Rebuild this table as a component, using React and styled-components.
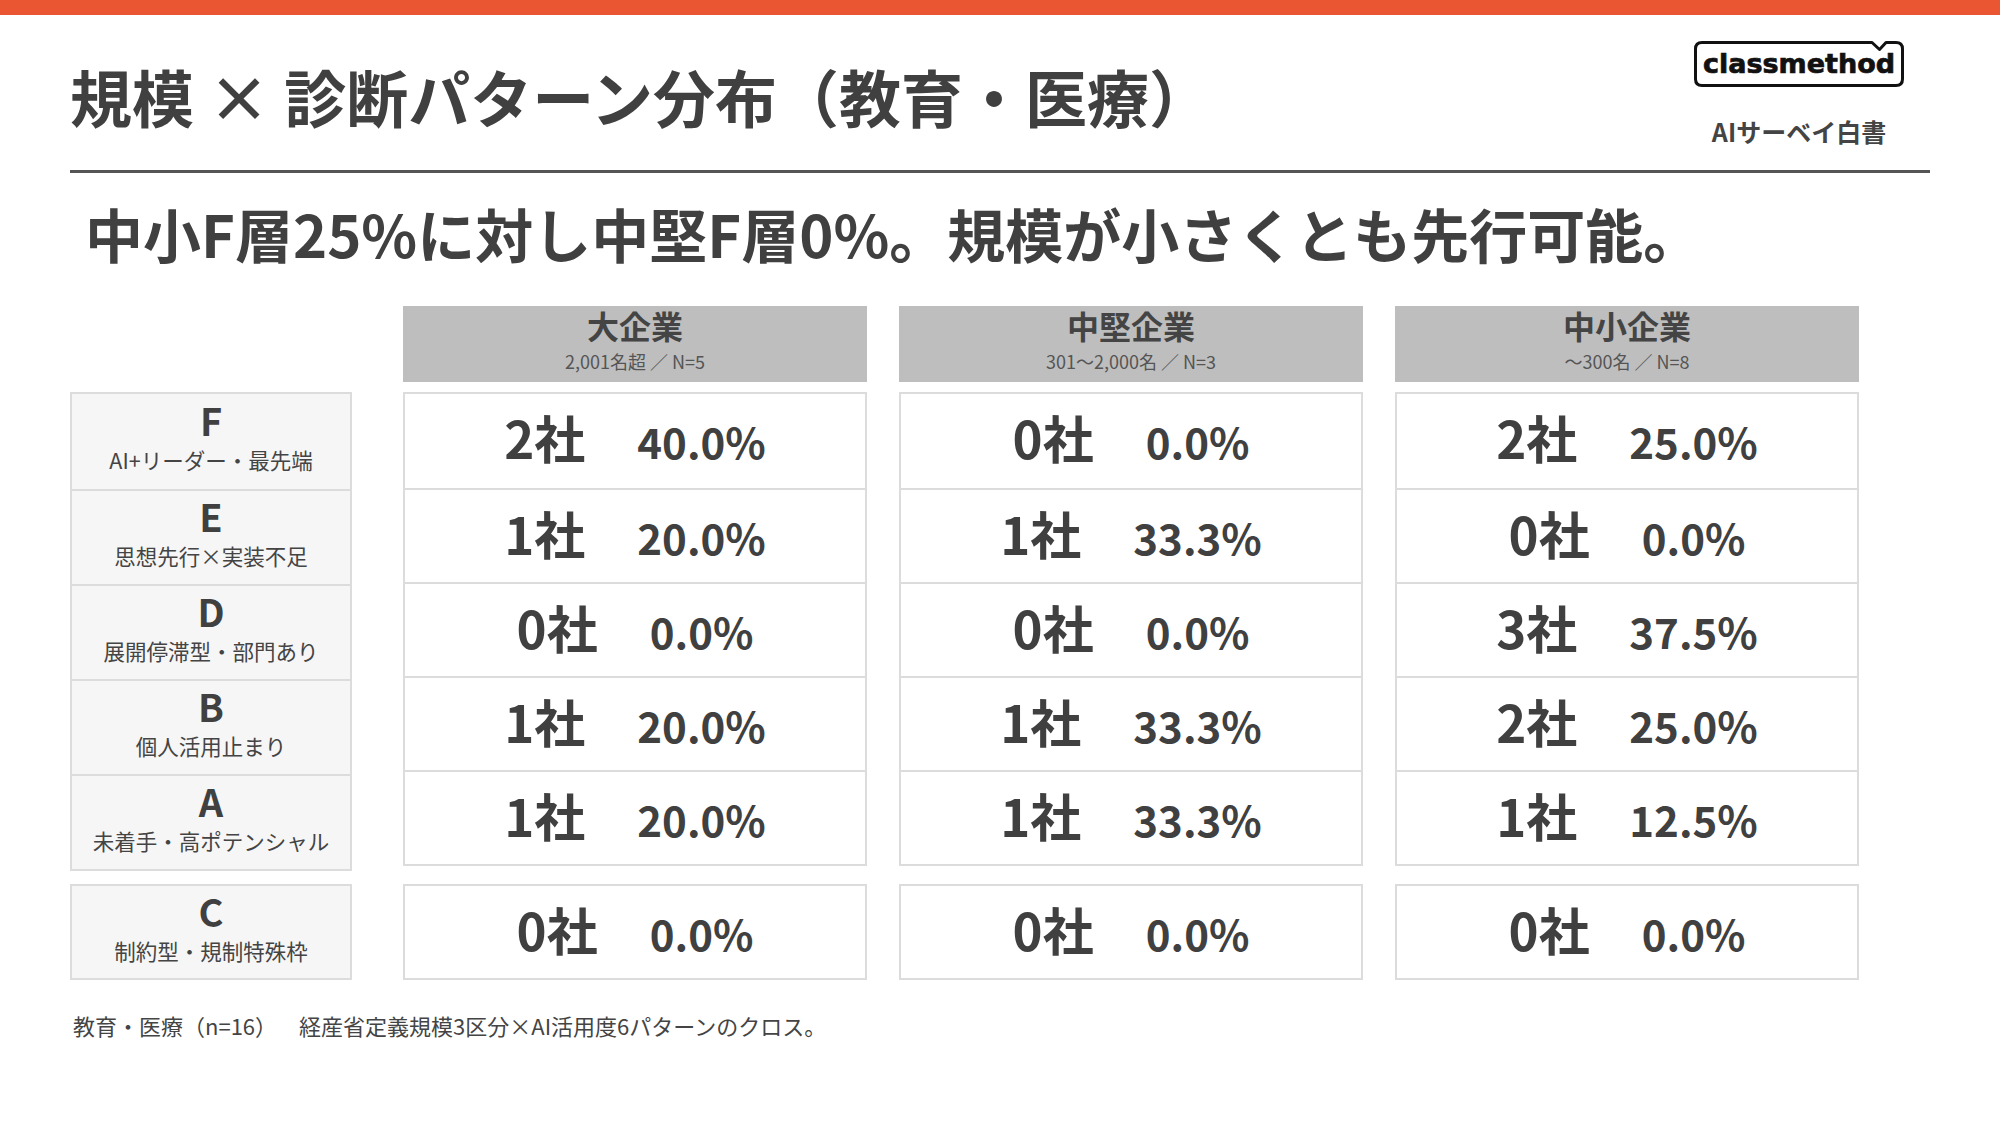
import React from "react";
import styled, { createGlobalStyle } from "styled-components";

const GlobalStyle = createGlobalStyle`
  html, body {
    margin: 0;
    padding: 0;
    background: #ffffff;
  }
  body {
    font-family: "Noto Sans CJK JP", "Noto Sans", sans-serif;
    color: #404040;
  }
`;

const columns = [
  { name: "大企業", sub: "2,001名超 ／ N=5" },
  { name: "中堅企業", sub: "301〜2,000名 ／ N=3" },
  { name: "中小企業", sub: "〜300名 ／ N=8" },
];

const patterns = [
  { key: "F", desc: "AI+リーダー・最先端", values: [[2, "40.0%"], [0, "0.0%"], [2, "25.0%"]] },
  { key: "E", desc: "思想先行×実装不足", values: [[1, "20.0%"], [1, "33.3%"], [0, "0.0%"]] },
  { key: "D", desc: "展開停滞型・部門あり", values: [[0, "0.0%"], [0, "0.0%"], [3, "37.5%"]] },
  { key: "B", desc: "個人活用止まり", values: [[1, "20.0%"], [1, "33.3%"], [2, "25.0%"]] },
  { key: "A", desc: "未着手・高ポテンシャル", values: [[1, "20.0%"], [1, "33.3%"], [1, "12.5%"]] },
];

const special = { key: "C", desc: "制約型・規制特殊枠", values: [[0, "0.0%"], [0, "0.0%"], [0, "0.0%"]] };

const Page = styled.div`
  width: 2000px;
  height: 1125px;
  background: #fff;
  overflow: hidden;
`;

const TopBar = styled.div`
  height: 15px;
  background: #ea5532;
`;

const Content = styled.div`
  padding: 0 70px;
`;

const Header = styled.header`
  display: flex;
  justify-content: space-between;
  align-items: flex-start;
  height: 155px;
  border-bottom: 3px solid #555;
`;

const Title = styled.h1`
  margin: 45px 0 0 0;
  font-size: 62px;
  line-height: 72px;
  font-weight: 700;
  color: #404040;
`;

const Brand = styled.div`
  display: flex;
  flex-direction: column;
  align-items: center;
  margin: 26px 26px 0 0;
`;

const Logo = styled.div`
  position: relative;
  width: 210px;
  height: 46px;
  display: flex;
  align-items: center;
  justify-content: center;
`;

const LogoFrame = styled.svg`
  position: absolute;
  inset: 0;
`;

const LogoText = styled.span`
  position: relative;
  font-family: "DejaVu Sans", sans-serif;
  font-weight: 700;
  font-size: 27px;
  letter-spacing: 0;
  color: #111;
  -webkit-text-stroke: 0.7px #111;
  line-height: 1;
  margin-top: -1px;
`;

const BrandCaption = styled.div`
  margin-top: 29px;
  font-size: 25px;
  line-height: 30px;
  font-weight: 700;
  color: #444;
`;

const Lead = styled.h2`
  margin: 25px 0 0 15px;
  font-size: 58px;
  line-height: 70px;
  font-weight: 700;
  color: #404040;
`;

const Table = styled.div`
  display: flex;
  margin-top: 38px;
`;

const LabelColumn = styled.div`
  width: 282px;
  margin-right: 51px;
  display: flex;
  flex-direction: column;
`;

const DataColumns = styled.div`
  display: flex;
  gap: 32px;
`;

const DataColumn = styled.div`
  width: 464px;
  display: flex;
  flex-direction: column;
`;

const HeadCell = styled.div`
  height: 76px;
  box-sizing: border-box;
  padding-bottom: 10px;
  margin-bottom: 10px;
  background: ${(p) => (p.$blank ? "transparent" : "#bebebe")};
  display: flex;
  flex-direction: column;
  align-items: center;
  justify-content: center;
`;

const HeadName = styled.div`
  font-size: 32px;
  line-height: 38px;
  font-weight: 700;
  color: #444;
  margin-bottom: 6px;
`;

const HeadSub = styled.div`
  font-size: 18px;
  line-height: 22px;
  color: #555;
`;

const Stack = styled.div`
  border: 2px solid #dcdcdc;
  display: flex;
  flex-direction: column;
  margin-top: ${(p) => p.$gap || 0}px;
`;

const LabelCell = styled.div`
  height: ${(p) => (p.$single ? 92 : 95)}px;
  box-sizing: border-box;
  padding-bottom: 10px;
  background: #f6f6f6;
  display: flex;
  flex-direction: column;
  align-items: center;
  justify-content: center;
  & + & {
    border-top: 2px solid #dcdcdc;
  }
`;

const Letter = styled.div`
  font-size: 38px;
  line-height: 42px;
  font-weight: 700;
  color: #404040;
  margin-bottom: 5px;
`;

const Desc = styled.div`
  font-size: 21.5px;
  line-height: 28px;
  color: #444;
`;

const ValueCell = styled.div`
  height: ${(p) => (p.$single ? 92 : 94)}px;
  background: #fff;
  display: flex;
  align-items: baseline;
  justify-content: center;
  padding-top: 8px;
  box-sizing: border-box;
  & + & {
    border-top: 2px solid #dcdcdc;
  }
`;

const Count = styled.span`
  font-size: 51px;
  line-height: 70px;
  font-weight: 700;
  color: #404040;
`;

const Percent = styled.span`
  margin-left: 52px;
  font-size: 42px;
  line-height: 70px;
  font-weight: 700;
  color: #404040;
`;

const Note = styled.p`
  margin: 30px 0 0 3px;
  font-size: 22px;
  line-height: 30px;
  color: #444;
`;

function Value({ v, single }) {
  return (
    <ValueCell $single={single}>
      <Count>{v[0]}社</Count>
      <Percent>{v[1]}</Percent>
    </ValueCell>
  );
}

export default function App() {
  return (
    <Page>
      <GlobalStyle />
      <TopBar />
      <Content>
        <Header>
          <Title>規模 × 診断パターン分布（教育・医療）</Title>
          <Brand>
            <Logo>
              <LogoFrame width="210" height="46" viewBox="0 0 210 46">
                <path
                  d="M8 1.5 H178 L185.5 8.5 L192 1.5 H202 Q208.5 1.5 208.5 8 V38 Q208.5 44.5 202 44.5 H8 Q1.5 44.5 1.5 38 V8 Q1.5 1.5 8 1.5 Z"
                  fill="none"
                  stroke="#111"
                  strokeWidth="3"
                  strokeLinejoin="round"
                />
              </LogoFrame>
              <LogoText>classmethod</LogoText>
            </Logo>
            <BrandCaption>AIサーベイ白書</BrandCaption>
          </Brand>
        </Header>

        <Lead>中小F層25%に対し中堅F層0%。規模が小さくとも先行可能。</Lead>

        <Table>
          <LabelColumn>
            <HeadCell $blank />
            <Stack>
              {patterns.map((p) => (
                <LabelCell key={p.key}>
                  <Letter>{p.key}</Letter>
                  <Desc>{p.desc}</Desc>
                </LabelCell>
              ))}
            </Stack>
            <Stack $gap={13}>
              <LabelCell $single>
                <Letter>{special.key}</Letter>
                <Desc>{special.desc}</Desc>
              </LabelCell>
            </Stack>
          </LabelColumn>

          <DataColumns>
            {columns.map((c, i) => (
              <DataColumn key={c.name}>
                <HeadCell>
                  <HeadName>{c.name}</HeadName>
                  <HeadSub>{c.sub}</HeadSub>
                </HeadCell>
                <Stack>
                  {patterns.map((p) => (
                    <Value key={p.key} v={p.values[i]} />
                  ))}
                </Stack>
                <Stack $gap={18}>
                  <Value v={special.values[i]} single />
                </Stack>
              </DataColumn>
            ))}
          </DataColumns>
        </Table>

        <Note>教育・医療（n=16）{"\u3000\u2002"}経産省定義規模3区分×AI活用度6パターンのクロス。</Note>
      </Content>
    </Page>
  );
}
